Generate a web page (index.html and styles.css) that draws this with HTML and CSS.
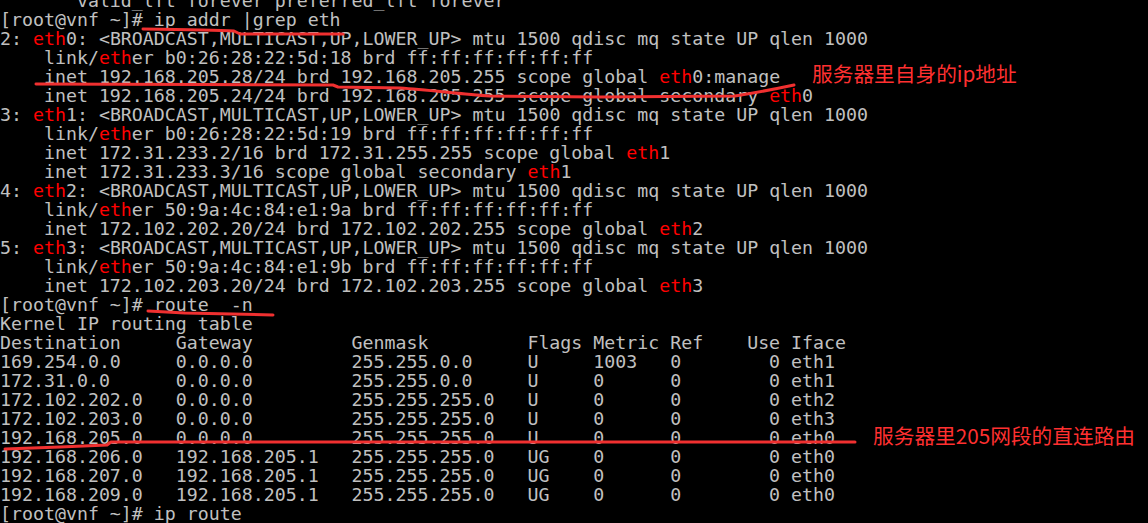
FILE: index.html
```html
<!DOCTYPE html>
<html lang="zh">
<head>
<meta charset="utf-8">
<title>terminal</title>
<link rel="stylesheet" href="styles.css">
</head>
<body>
<main class="term">
<pre class="out">       valid_lft forever preferred_lft forever
[root@vnf ~]# ip addr |grep eth
2: <span class="hl">eth</span>0: &lt;BROADCAST,MULTICAST,UP,LOWER_UP&gt; mtu 1500 qdisc mq state UP qlen 1000
    link/<span class="hl">eth</span>er b0:26:28:22:5d:18 brd ff:ff:ff:ff:ff:ff
    inet 192.168.205.28/24 brd 192.168.205.255 scope global <span class="hl">eth</span>0:manage
    inet 192.168.205.24/24 brd 192.168.205.255 scope global secondary <span class="hl">eth</span>0
3: <span class="hl">eth</span>1: &lt;BROADCAST,MULTICAST,UP,LOWER_UP&gt; mtu 1500 qdisc mq state UP qlen 1000
    link/<span class="hl">eth</span>er b0:26:28:22:5d:19 brd ff:ff:ff:ff:ff:ff
    inet 172.31.233.2/16 brd 172.31.255.255 scope global <span class="hl">eth</span>1
    inet 172.31.233.3/16 scope global secondary <span class="hl">eth</span>1
4: <span class="hl">eth</span>2: &lt;BROADCAST,MULTICAST,UP,LOWER_UP&gt; mtu 1500 qdisc mq state UP qlen 1000
    link/<span class="hl">eth</span>er 50:9a:4c:84:e1:9a brd ff:ff:ff:ff:ff:ff
    inet 172.102.202.20/24 brd 172.102.202.255 scope global <span class="hl">eth</span>2
5: <span class="hl">eth</span>3: &lt;BROADCAST,MULTICAST,UP,LOWER_UP&gt; mtu 1500 qdisc mq state UP qlen 1000
    link/<span class="hl">eth</span>er 50:9a:4c:84:e1:9b brd ff:ff:ff:ff:ff:ff
    inet 172.102.203.20/24 brd 172.102.203.255 scope global <span class="hl">eth</span>3
[root@vnf ~]# route  -n
Kernel IP routing table
Destination     Gateway         Genmask         Flags Metric Ref    Use Iface
169.254.0.0     0.0.0.0         255.255.0.0     U     1003   0        0 eth1
172.31.0.0      0.0.0.0         255.255.0.0     U     0      0        0 eth1
172.102.202.0   0.0.0.0         255.255.255.0   U     0      0        0 eth2
172.102.203.0   0.0.0.0         255.255.255.0   U     0      0        0 eth3
192.168.205.0   0.0.0.0         255.255.255.0   U     0      0        0 eth0
192.168.206.0   192.168.205.1   255.255.255.0   UG    0      0        0 eth0
192.168.207.0   192.168.205.1   255.255.255.0   UG    0      0        0 eth0
192.168.209.0   192.168.205.1   255.255.255.0   UG    0      0        0 eth0
[root@vnf ~]# ip route</pre>
<svg class="marks" width="1148" height="523" viewBox="0 0 1148 523" aria-hidden="true">
  <g fill="none" stroke="#f03030" stroke-width="3" stroke-linecap="round" stroke-linejoin="round">
    <path d="M143,29 C180,29.5 215,30 234,31 L240,34 L343,34"/>
    <path d="M36,84 L200,84.5 L333,85 L338,87 L400,88 C430,90 460,94 490,96 L600,97 L735,96 C760,92 780,88 794,85"/>
    <path d="M148,311 L185,313 L273,315"/>
    <path d="M5,449 L60,447 L107,445 L111,442 L855,442"/>
  </g>
</svg>
<p class="note note-ip">服务器里自身的ip地址</p>
<p class="note note-route">服务器里205网段的直连路由</p>
</main>
</body>
</html>
```
FILE: styles.css
```css
html, body {
  margin: 0;
  padding: 0;
  background: #000;
  overflow: hidden;
}

.term {
  position: relative;
  width: 1148px;
  height: 523px;
  overflow: hidden;
  background: #000;
}

.out {
  margin: -9px 0 0 0;
  padding: 0;
  font-family: "DejaVu Sans Mono", "Liberation Mono", monospace;
  font-size: 18.25px;
  line-height: 19px;
  color: #c0c0c0;
  white-space: pre;
}

.hl {
  color: #ff0000;
}

.marks {
  position: absolute;
  left: 0;
  top: 0;
  pointer-events: none;
}

.note {
  position: absolute;
  margin: 0;
  font-family: "Noto Sans CJK SC", "Noto Sans", sans-serif;
  font-size: 20.7px;
  line-height: 22px;
  color: #ff3030;
  white-space: nowrap;
}

.note-ip {
  left: 812px;
  top: 62px;
}

.note-route {
  left: 873px;
  top: 424px;
}
```
